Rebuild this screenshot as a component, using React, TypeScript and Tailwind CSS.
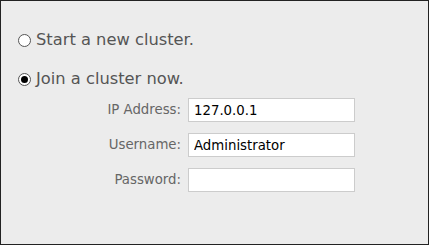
import { useState } from "react";

function Radio({ checked }: { checked: boolean }) {
  return (
    <span className="w-[13px] h-[13px] rounded-full border border-[#555] bg-white flex items-center justify-center shrink-0">
      {checked && <span className="w-[7px] h-[7px] rounded-full bg-black" />}
    </span>
  );
}

const fields = [
  { label: "IP Address:", value: "127.0.0.1" },
  { label: "Username:", value: "Administrator" },
  { label: "Password:", value: "" },
];

export default function App() {
  const [mode, setMode] = useState<"new" | "join">("join");

  return (
    <div
      className="w-[429px] h-[245px] bg-[#ececec] border border-[#222] pt-[29px] pl-[17px]"
      style={{ fontFamily: '"DejaVu Sans", Verdana, sans-serif' }}
    >
      <button
        onClick={() => setMode("new")}
        className="flex items-center gap-[5px] h-[20px] text-[16.3px] text-[#555]"
      >
        <Radio checked={mode === "new"} />
        <span>Start a new cluster.</span>
      </button>

      <button
        onClick={() => setMode("join")}
        className="flex items-center gap-[5px] h-[20px] mt-[19px] text-[16.3px] text-[#555]"
      >
        <Radio checked={mode === "join"} />
        <span>Join a cluster now.</span>
      </button>

      <div className="mt-[9px] flex flex-col gap-[11px]">
        {fields.map((f) => (
          <div key={f.label} className="flex items-center">
            <label className="w-[170px] text-right pr-[7px] text-[13.3px] text-[#666]">
              {f.label}
            </label>
            <input
              type={f.label === "Password:" ? "password" : "text"}
              defaultValue={f.value}
              className="w-[167px] h-[24px] bg-white border border-[#ccc] px-[5px] text-[13.3px] text-black outline-none"
            />
          </div>
        ))}
      </div>
    </div>
  );
}
